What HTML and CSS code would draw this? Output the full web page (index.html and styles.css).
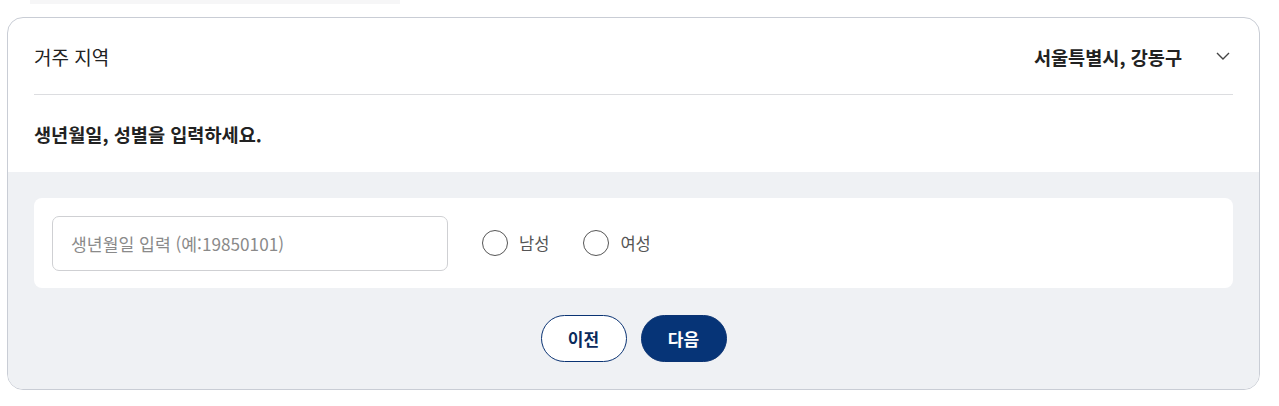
FILE: index.html
```html
<!DOCTYPE html>
<html lang="ko">
<head>
<meta charset="utf-8">
<title>거주 지역</title>
<link rel="stylesheet" href="styles.css">
</head>
<body>
<div class="top-strip"></div>
<section class="card">
  <div class="card-body">
    <div class="row-head">
      <span class="label">거주 지역</span>
      <span class="value">서울특별시, 강동구
        <svg class="chev" width="14" height="8" viewBox="0 0 14 8"><path d="M1 1 L7 7 L13 1" fill="none" stroke="#444" stroke-width="1.4"/></svg>
      </span>
    </div>
    <div class="prompt">생년월일, 성별을 입력하세요.</div>
  </div>
  <div class="form-area">
    <div class="form-box">
      <input class="birth" type="text" placeholder="생년월일 입력 (예:19850101)">
      <label class="radio"><span class="circle"></span>남성</label>
      <label class="radio"><span class="circle"></span>여성</label>
    </div>
    <div class="buttons">
      <button class="btn btn-prev">이전</button>
      <button class="btn btn-next">다음</button>
    </div>
  </div>
</section>
</body>
</html>
```
FILE: styles.css
```css
* { box-sizing: border-box; }
body {
  margin: 0;
  background: #fff;
  font-family: "Noto Sans CJK KR", "Noto Sans", sans-serif;
  color: #222;
}
.top-strip {
  margin-left: 30px;
  width: 370px;
  height: 4px;
  background: #f6f6f7;
}
.card {
  margin: 13px 0 0 7px;
  width: 1253px;
  height: 373px;
  border: 1px solid #c9cdd5;
  border-radius: 16px;
  overflow: hidden;
  display: flex;
  flex-direction: column;
}
.card-body {
  padding: 0 26px;
}
.row-head {
  height: 77px;
  border-bottom: 1px solid #dcdde0;
  display: flex;
  align-items: center;
  justify-content: space-between;
}
.label {
  font-size: 19px;
  color: #222;
}
.value {
  font-size: 18.6px;
  font-weight: 700;
  color: #222;
  display: flex;
  align-items: center;
}
.chev {
  margin-left: 34px;
  margin-right: 3px;
}
.prompt {
  height: 77px;
  display: flex;
  align-items: center;
  font-size: 18.6px;
  font-weight: 700;
  color: #222;
}
.form-area {
  flex: 1;
  background: #eff1f4;
  padding: 26px 26px 0;
}
.form-box {
  background: #fff;
  border-radius: 8px;
  height: 90px;
  padding: 0 18px;
  display: flex;
  align-items: center;
}
.birth {
  width: 396px;
  height: 55px;
  border: 1px solid #cfd0d3;
  border-radius: 7px;
  padding: 0 18px;
  font-family: inherit;
  font-size: 17.2px;
  color: #222;
  outline: none;
}
.birth::placeholder { color: #8a8a8a; }
.radio {
  display: flex;
  align-items: center;
  font-size: 16.5px;
  color: #555;
  margin-left: 34px;
}
.radio + .radio { margin-left: 34px; }
.circle {
  width: 26px;
  height: 26px;
  border: 1.3px solid #555;
  border-radius: 50%;
  margin-right: 11px;
  background: #fff;
}
.buttons {
  display: flex;
  justify-content: center;
  gap: 14px;
  margin-top: 27px;
}
.btn {
  width: 86px;
  height: 47px;
  border-radius: 24px;
  font-family: inherit;
  font-size: 17px;
  font-weight: 700;
  border: 1px solid #0a3373;
  cursor: pointer;
}
.btn-prev { background: #fff; color: #0a2a5c; }
.btn-next { background: #063477; color: #fff; }
```
